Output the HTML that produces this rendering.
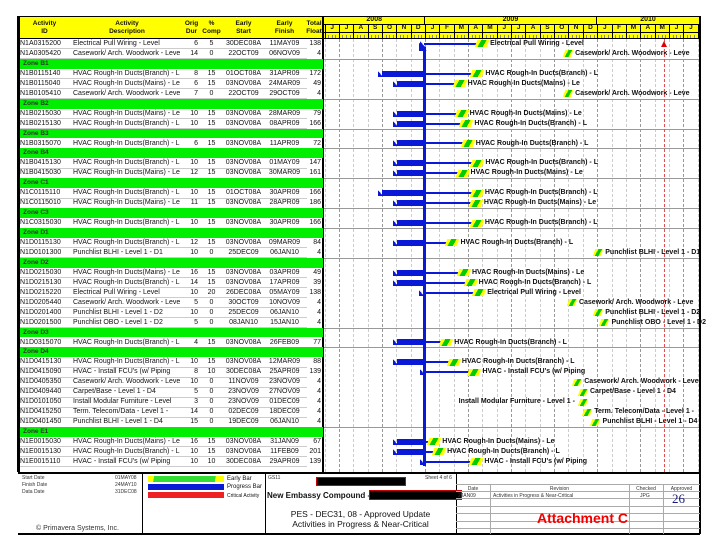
<!DOCTYPE html>
<html><head><meta charset="utf-8">
<style>
*{margin:0;padding:0;box-sizing:border-box}
body{width:720px;height:540px;background:#fff;position:relative;overflow:hidden;font-family:"Liberation Sans",Arial,sans-serif;color:#111}
.a{position:absolute;white-space:nowrap}
.t{font-size:7px;line-height:10px}
.hd{font-size:6.5px;font-weight:bold;text-align:center;line-height:8px}
.lbl{font-size:7px;font-weight:bold;line-height:10px;color:#111}
</style></head><body>
<div id="root"></div>
<script>
var R=document.getElementById('root');
function d(x,y,w,h,st,txt,cls){var e=document.createElement('div');e.className='a '+(cls||'');e.style.left=x+'px';e.style.top=y+'px';if(w!=null)e.style.width=w+'px';if(h!=null)e.style.height=h+'px';if(st)e.style.cssText+=';'+st;if(txt!=null)e.textContent=txt;R.appendChild(e);return e;}
var L=18,RT=700,TOP=16,HB=39,RH=9.95;
var MON={JAN:0,FEB:1,MAR:2,APR:3,MAY:4,JUN:5,JUL:6,AUG:7,SEP:8,OCT:9,NOV:10,DEC:11};
function mx(s){var day=parseInt(s.substr(0,2)),mo=MON[s.substr(2,3)],yr=2000+parseInt(s.substr(5,2));var m=(yr-2008)*12+mo-5+(day-1)/30;return 324.5+m*14.35;}
var rows=[
["N1A0315200","Electrical Pull Wiring - Level","6","5","30DEC08A","11MAY09","138","p"],
["N1A0305420","Casework/ Arch. Woodwork - Leve","14","0","22OCT09","06NOV09","4","f"],
["Zone B1"],
["N1B0115140","HVAC Rough-In Ducts(Branch) - L","8","15","01OCT08A","31APR09","172","p"],
["N1B0115040","HVAC Rough-In Ducts(Mains) - Le","6","15","03NOV08A","24MAR09","49","p"],
["N1B0105410","Casework/ Arch. Woodwork - Leve","7","0","22OCT09","29OCT09","4","f"],
["Zone B2"],
["N1B0215030","HVAC Rough-In Ducts(Mains) - Le","10","15","03NOV08A","28MAR09","79","p"],
["N1B0215130","HVAC Rough-In Ducts(Branch) - L","10","15","03NOV08A","08APR09","166","p"],
["Zone B3"],
["N1B0315070","HVAC Rough-In Ducts(Branch) - L","6","15","03NOV08A","11APR09","72","p"],
["Zone B4"],
["N1B0415130","HVAC Rough-In Ducts(Branch) - L","10","15","03NOV08A","01MAY09","147","p"],
["N1B0415030","HVAC Rough-In Ducts(Mains) - Le","12","15","03NOV08A","30MAR09","161","p"],
["Zone C1"],
["N1C0115110","HVAC Rough-In Ducts(Branch) - L","10","15","01OCT08A","30APR09","166","p"],
["N1C0115010","HVAC Rough-In Ducts(Mains) - Le","11","15","03NOV08A","28APR09","186","p"],
["Zone C3"],
["N1C0315030","HVAC Rough-In Ducts(Branch) - L","10","15","03NOV08A","30APR09","166","p"],
["Zone D1"],
["N1D0115130","HVAC Rough-In Ducts(Branch) - L","12","15","03NOV08A","09MAR09","84","p"],
["N1D0101300","Punchlist BLHI - Level 1 - D1","10","0","25DEC09","06JAN10","4","f"],
["Zone D2"],
["N1D0215030","HVAC Rough-In Ducts(Mains) - Le","16","15","03NOV08A","03APR09","49","p"],
["N1D0215130","HVAC Rough-In Ducts(Branch) - L","14","15","03NOV08A","17APR09","39","p"],
["N1D0215220","Electrical Pull Wiring - Level","10","20","26DEC08A","05MAY09","138","p"],
["N1D0205440","Casework/ Arch. Woodwork - Leve","5","0","30OCT09","10NOV09","4","f"],
["N1D0201400","Punchlist BLHI - Level 1 - D2","10","0","25DEC09","06JAN10","4","f"],
["N1D0201500","Punchlist OBO - Level 1 - D2","5","0","08JAN10","15JAN10","4","f"],
["Zone D3"],
["N1D0315070","HVAC Rough-In Ducts(Branch) - L","4","15","03NOV08A","26FEB09","77","p"],
["Zone D4"],
["N1D0415130","HVAC Rough-In Ducts(Branch) - L","10","15","03NOV08A","12MAR09","88","p"],
["N1D0415090","HVAC - Install FCU's (w/ Piping","8","10","30DEC08A","25APR09","139","p"],
["N1D0405350","Casework/ Arch. Woodwork - Leve","10","0","11NOV09","23NOV09","4","f"],
["N1D0409440","Carpet/Base - Level 1 - D4","5","0","23NOV09","27NOV09","4","f"],
["N1D0101050","Install Modular Furniture - Level 1 -","3","0","23NOV09","01DEC09","4","fl"],
["N1D0415250","Term. Telecom/Data - Level 1 -","14","0","02DEC09","18DEC09","4","f"],
["N1D0401450","Punchlist BLHI - Level 1 - D4","15","0","19DEC09","06JAN10","4","f"],
["Zone E1"],
["N1E0015030","HVAC Rough-In Ducts(Mains) - Le","16","15","03NOV08A","31JAN09","67","p"],
["N1E0015130","HVAC Rough-In Ducts(Branch) - L","10","15","03NOV08A","11FEB09","201","p"],
["N1E0015110","HVAC - Install FCU's (w/ Piping","10","10","30DEC08A","29APR09","139","p"]
];
var cols=[[L,71],[71,183],[183,200],[200,223],[223,264],[264,305],[305,323]];
d(L,TOP,323-L,HB-TOP,"background:#ffff00");
var hs=["Activity\nID","Activity\nDescription","Orig\nDur","%\nComp","Early\nStart","Early\nFinish","Total\nFloat"];
for(var i=0;i<7;i++){d(cols[i][0],TOP+4,cols[i][1]-cols[i][0],16,"white-space:pre",hs[i],"hd");}
d(323,TOP,RT-323,HB-TOP,"background:#ffff00");
var YR=[[324.5,424.9,"2008"],[424.9,597,"2009"],[597,RT,"2010"]];
YR.forEach(function(y){d(y[0],TOP,y[1]-y[0],8,"font-size:7px;font-weight:bold;text-align:center;line-height:8px;border-right:1px solid #000",y[2]);});
d(323,TOP+8,RT-323,1,"background:#000");
d(323,TOP+16,RT-323,1,"background:#000");
var ml="JJASONDJFMAMJJASONDJFMAMJJA";
for(var m=0;m<27;m++){var x=324.5+m*14.35;var w=Math.min(14.35,RT-1-x);if(w<=1)break;
 d(x,TOP+8,w,8,"font-size:6.5px;font-weight:bold;text-align:center;line-height:8px;border-left:1px solid #000;overflow:hidden",ml[m]);
 for(var k=1;k<4;k++){if(x+k*3.6<RT-2)d(x+k*3.6,TOP+19,1,4,"background:#888");}
 d(x,TOP+17,1,6,"background:#000");
 d(x,HB,0,472-HB,"border-left:1px dashed "+(m%3==1?"#999":"#ccc"));
}
d(L,TOP,RT-L,1,"background:#000");
d(L,HB-1,RT-L,1,"background:#000");
d(L-1,TOP,3,472-TOP,"background:#000");
d(RT-1,TOP,2,534-TOP,"background:#000");
d(322,TOP,2,472-TOP,"background:#000");
rows.forEach(function(r,i){
 var y=HB+i*RH;
 if(r.length==1){d(L+2,y,323-L-2,RH,"background:#00ee00;font-size:6.5px;line-height:10px;padding-left:3px;font-weight:bold;color:#333",r[0]);
  d(324,y,RT-325,1,"background:#999");return;}
 d(L+2,y+RH-0.5,305-L,0,"border-top:1px solid #ccc");
 var al=["left","left","right","center","center","center","right"];
 for(var c=0;c<7;c++){d(cols[c][0]+2,y,cols[c][1]-cols[c][0]-4,RH,"text-align:"+al[c]+";overflow:hidden",c==1&&r[1].length>33?r[1].substr(0,34):r[c],"t");}
 var xs=mx(r[4]),xf=mx(r[5]);var cy=y+RH/2;
 if(r[7]=="p"){
  d(xs,cy-3,424-xs,6,"background:#0a18d8");
  d(xs-4,cy-3,5,6,"background:linear-gradient(to top right,#0a18d8 50%,transparent 50%)");
  d(424,cy-1,xf-424-10,2,"background:#0a18d8");
  d(xf-11,cy-3.5,12,7,"background:linear-gradient(100deg,#ffff00 30%,#00cc00 30%,#00cc00 70%,#ffff00 70%);transform:skewX(-20deg)");
  d(xf+3,y,null,RH,"",r[1],"lbl");
 }else{
  var w=Math.max(xf-xs,8);
  d(xs,cy-3.5,w,7,"background:linear-gradient(100deg,#ffff00 35%,#00cc00 35%,#00cc00 75%,#ffff00 75%);transform:skewX(-20deg)");
  if(r[7]=="fl"){var e=d(0,y,xs-4,RH,"text-align:right",r[1],"lbl");}
  else d(xs+w+3,y,null,RH,"",r[1],"lbl");
 }
});
d(423,HB+8,3,466-(HB+8),"background:#0a18d8");
d(419,HB+4,8,8,"background:linear-gradient(to top right,#0a18d8 50%,transparent 50%)");
d(664,HB,0,472-HB,"border-left:1px dashed #e05050");
d(661,HB+2,0,0,"border-left:3px solid transparent;border-right:3px solid transparent;border-bottom:6px solid #e00000");
var FT=472,FB=534;
d(L,FT,RT-L,2,"background:#000");
d(L,FB-1,RT-L,2,"background:#000");
[142,265,456].forEach(function(x){d(x,FT,1,FB-FT,"background:#000");});
var fs="font-size:5px;color:#333";
d(22,475,null,null,fs,"Start Date");d(22,482,null,null,fs,"Finish Date");d(22,489,null,null,fs,"Data Date");
d(115,475,null,null,fs,"01MAY08");d(115,482,null,null,fs,"24MAY10");d(115,489,null,null,fs,"31DEC08");
d(36,525,null,null,"font-size:7px;color:#333","© Primavera Systems, Inc.");
d(148,476,76,6,"background:linear-gradient(100deg,#ffff00 8%,#33dd33 8%,#33dd33 88%,#ffff00 88%)");
d(148,484,76,6,"background:#0a18d8");
d(148,492,76,6,"background:#e22");
d(227,476,null,null,"font-size:6px","Early Bar");d(227,484,null,null,"font-size:6px","Progress Bar");d(227,493,null,null,"font-size:5px","Critical Activity");
d(268,475,null,null,fs,"GS11");d(425,475,null,null,fs,"Sheet 4 of 6");
d(316,477,90,9,"background:#000;border:1px solid #c00");
d(267,491,null,null,"font-size:8px;font-weight:bold;color:#111","New Embassy Compound -");
d(369,490,93,10,"background:#000;border:1px solid #c00");
d(265,509,191,null,"font-size:8.5px;text-align:center;line-height:10px","PES - DEC31, 08 - Approved Update");
d(265,519,191,null,"font-size:8.5px;text-align:center;line-height:10px","Activities in Progress & Near-Critical");
[484,491,498,506,513,521,528].forEach(function(y){d(456,y,244,0,"border-top:1px solid #aaa");});
[490,629,663].forEach(function(x){d(x,484,0,FB-484,"border-left:1px solid #aaa");});
d(456,486,34,null,fs+";text-align:center","Date");d(490,486,139,null,fs+";text-align:center","Revision");
d(629,486,34,null,fs+";text-align:center","Checked");d(663,486,37,null,fs+";text-align:center","Approved");
d(458,493,null,null,fs,"2JAN09");d(493,493,null,null,fs,"Activities in Progress & Near-Critical");d(640,493,null,null,fs,"JPG");
d(672,491,null,null,"font-family:'Liberation Serif',serif;font-size:13px;color:#1a1a80","26");
d(537,510,null,null,"font-size:14px;font-weight:bold;color:#e00","Attachment C");
</script>
</body></html>
